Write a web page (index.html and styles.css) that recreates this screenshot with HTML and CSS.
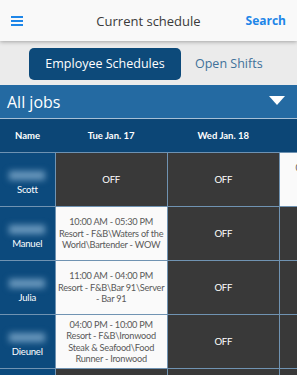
FILE: index.html
```html
<!DOCTYPE html>
<html lang="en">
<head>
  <meta charset="UTF-8" />
  <meta name="viewport" content="width=device-width, initial-scale=1.0" />
  <title>Current schedule</title>
  <link rel="stylesheet" href="styles.css">
</head>
<body>
  <header class="topbar">
    <span class="menu-btn" aria-label="Menu">
      <svg width="12" height="10" viewBox="0 0 12 10"><rect x="0" y="0" width="12" height="2" fill="#1e86e8"/><rect x="0" y="4" width="12" height="2" fill="#1e86e8"/><rect x="0" y="8" width="12" height="2" fill="#1e86e8"/></svg>
    </span>
    <h1 class="title">Current schedule</h1>
    <a class="search" href="#">Search</a>
  </header>

  <nav class="tabs">
    <span class="tab active">Employee Schedules</span>
    <span class="tab">Open Shifts</span>
  </nav>

  <div class="jobs-bar">
    <span>All jobs</span>
    <svg class="caret" width="16" height="10" viewBox="0 0 16 10"><polygon points="0,0 16,0 8,9" fill="#fff"/></svg>
  </div>

  <div class="table-wrap">
    <table class="schedule">
      <colgroup>
        <col class="c-name">
        <col class="c-day">
        <col class="c-day">
        <col class="c-day">
      </colgroup>
      <thead>
        <tr>
          <th>Name</th>
          <th>Tue Jan. 17</th>
          <th>Wed Jan. 18</th>
          <th></th>
        </tr>
      </thead>
      <tbody>
        <tr>
          <td class="name"><span class="blur"></span>Scott</td>
          <td class="off">OFF</td>
          <td class="off">OFF</td>
          <td class="shift">08:00 AM - 04:30 PM<br>Resort - F&amp;B\Bar 91\Server</td>
        </tr>
        <tr>
          <td class="name"><span class="blur"></span>Manuel</td>
          <td class="shift">10:00 AM - 05:30 PM<br>Resort - F&amp;B\Waters of the World\Bartender - WOW</td>
          <td class="off">OFF</td>
          <td class="off"></td>
        </tr>
        <tr>
          <td class="name"><span class="blur"></span>Julia</td>
          <td class="shift">11:00 AM - 04:00 PM<br>Resort - F&amp;B\Bar 91\Server - Bar 91</td>
          <td class="off">OFF</td>
          <td class="off"></td>
        </tr>
        <tr>
          <td class="name"><span class="blur"></span>Dieunel</td>
          <td class="shift">04:00 PM - 10:00 PM<br>Resort - F&amp;B\Ironwood Steak &amp; Seafood\Food Runner - Ironwood</td>
          <td class="off">OFF</td>
          <td class="off"></td>
        </tr>
        <tr>
          <td class="name"><span class="blur"></span>Maria</td>
          <td class="off">OFF</td>
          <td class="off">OFF</td>
          <td class="off"></td>
        </tr>
      </tbody>
    </table>
  </div>
</body>
</html>
```

FILE: styles.css
```css
html, body {
  margin: 0;
  padding: 0;
}
body {
  width: 297px;
  height: 375px;
  overflow: hidden;
  background: #ebebeb;
  font-family: "Open Sans", "Noto Sans", sans-serif;
  color: #333;
}
.topbar {
  position: relative;
  z-index: 1;
  height: 41px;
  display: flex;
  align-items: center;
  padding: 0 11px;
  background: #f9f9f9;
  box-shadow: 0 1px 4px rgba(0, 0, 0, 0.3);
}
.menu-btn {
  display: flex;
  width: 50px;
}
.title {
  flex: 1;
  margin: 0;
  text-align: center;
  font-size: 13px;
  font-weight: normal;
  color: #3a3a3a;
}
.search {
  width: 50px;
  text-align: right;
  font-size: 12px;
  font-weight: bold;
  color: #1e86e8;
  text-decoration: none;
}
.tabs {
  height: 44px;
  display: flex;
  align-items: center;
  padding-left: 29px;
  gap: 14px;
}
.tab {
  font-size: 12.5px;
  color: #41719a;
}
.tab.active {
  width: 152px;
  height: 32px;
  line-height: 32px;
  margin-top: 1px;
  text-align: center;
  border-radius: 5px;
  background: #0d4a7a;
  color: #fff;
}
.jobs-bar {
  height: 33px;
  display: flex;
  align-items: center;
  justify-content: space-between;
  padding: 0 12px 0 7px;
  background: #246aa2;
  border-bottom: 1px solid #a7c0d6;
  color: #fff;
  font-size: 16px;
}
.caret {
  margin-top: -2px;
}
.table-wrap {
  width: 297px;
  overflow: hidden;
}
.schedule {
  width: 392px;
  table-layout: fixed;
  border-collapse: collapse;
  font-family: Lato, "Open Sans", sans-serif;
  font-size: 9.2px;
  letter-spacing: -0.25px;
}
.c-name { width: 55px; }
.c-day { width: 112px; }
.schedule th {
  height: 33px;
  padding: 0;
  background: #0c4676;
  color: #fff;
  font-size: 9.5px;
  font-weight: bold;
  letter-spacing: 0;
  text-align: center;
  border-bottom: 1px solid #6e92b2;
}
.schedule td {
  height: 53px;
  padding: 0 1px;
  text-align: center;
  line-height: 11.5px;
  border: 1px solid #7093b2;
}
.schedule td:first-child {
  border-left: none;
}
.schedule td.shift:last-child {
  padding-left: 5px;
}
.name {
  background: #0c4a7d;
  color: #fff;
  font-size: 9.6px;
}
.blur {
  display: block;
  width: 36px;
  height: 9px;
  margin: 8px auto 4px;
  background: #6a98bd;
  filter: blur(3px);
}
.off {
  background: #393939;
  color: #fff;
  font-size: 9.6px;
}
.shift {
  background: #fafafa;
  color: #595959;
}
```
